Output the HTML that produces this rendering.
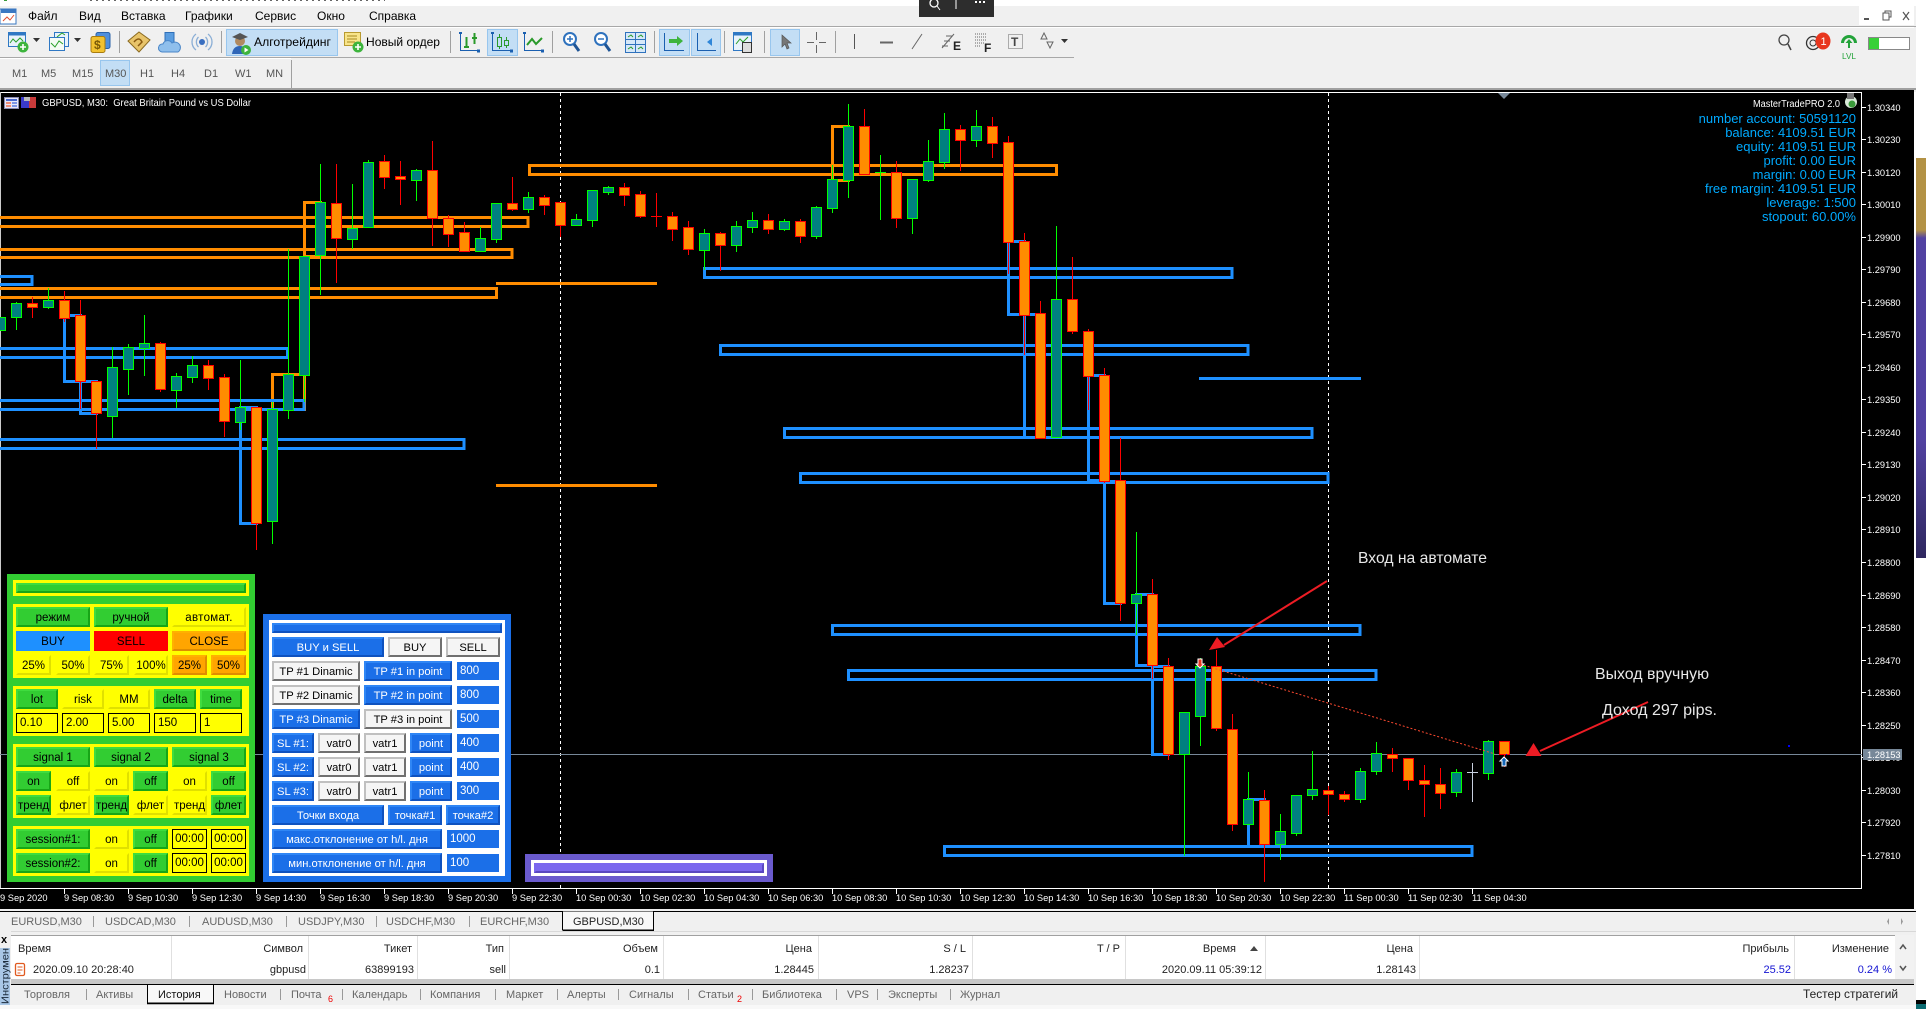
<!DOCTYPE html>
<html lang="ru"><head><meta charset="utf-8"><title>MetaTrader</title>
<style>
html,body{margin:0;padding:0;background:#fff;width:1926px;height:1009px;overflow:hidden}
svg{position:absolute;left:0;top:0;font-family:"Liberation Sans","Noto Sans CJK SC",sans-serif}
.p{position:absolute}
.b{position:absolute;box-sizing:border-box;border:2px solid;text-align:center;font:11.5px/18px "Liberation Sans",sans-serif;color:#000;white-space:nowrap;overflow:hidden}
.g{background:#32cd32;border-color:#3fdc3f #17a617 #17a617 #3fdc3f}
.y{background:#ff0;border-color:#ff0 #e0e000 #e0e000 #ff0}
.bl{background:#1e90ff;border-color:#1e90ff}
.r{background:#f00;border-color:#f00}
.o{background:#ffa500;border-color:#ffb000 #e08c00 #e08c00 #ffb000}
.u{background:#1b6fe8;border-color:#2f86f5 #0f52bf #0f52bf #2f86f5;color:#fff;font-size:11.2px}
.w{background:#f5f5f5;border-color:#c0c0c0 #707070 #707070 #c0c0c0;font-size:11.2px}
.ib{border:1px solid #000;background:#ff0;text-align:left;padding-left:3px;line-height:19px}
.iu{border:0;background:#1b6fe8;color:#fff;text-align:left;padding-left:3px;line-height:19px}
.m{font-size:12px;fill:#000}
.tf{font-size:11px;fill:#555}
.tb{font-size:11px;fill:#666}
.h{font-size:11px;fill:#222;text-anchor:end}
.t{font-size:9.3px;fill:#fff}
.i{font-size:13px;fill:#00aaff;text-anchor:end}
</style></head><body>
<svg width="1926" height="1009" viewBox="0 0 1926 1009">
<defs><linearGradient id="wp" x1="0" y1="0" x2="0" y2="1"><stop offset="0" stop-color="#b39245"/><stop offset=".18" stop-color="#b39245"/><stop offset=".2" stop-color="#5242a2"/><stop offset=".7" stop-color="#5242a2"/><stop offset="1" stop-color="#2f2860"/></linearGradient></defs>
<rect x="1916" y="158" width="10" height="400" fill="url(#wp)"/>
<rect x="1916" y="1000" width="10" height="4" fill="#000"/><rect x="1916" y="1004" width="10" height="5" fill="#0a6a70"/>
<rect x="0" y="6" width="1916" height="86" fill="#f0f0f0"/>
<rect x="0" y="0" width="1926" height="6" fill="#fff"/>
<path d="M90 .5H385" stroke="#666" stroke-dasharray="2 4" fill="none"/><path d="M4 .5h3" stroke="#3a9a3a"/>
<!-- top popup -->
<rect x="919" y="0" width="75" height="17" fill="#2d2d2d"/>
<circle cx="934" cy="3" r="4" fill="none" stroke="#fff" stroke-width="1.3"/><path d="M937 6l3 4M956 0v9" stroke="#fff" fill="none"/><path d="M975 2h2M979 2h2M983 2h2" stroke="#fff" stroke-width="2"/>
<!-- menu -->
<rect x="0" y="9" width="16" height="15" fill="#fff" stroke="#3a78c2"/><rect x="1" y="9" width="15" height="4" fill="#3a78c2"/><path d="M3 21l4-4 3 3 4-5" stroke="#e05030" fill="none"/>
<g class="m"><text class="m" x="28" y="20">Файл</text><text class="m" x="79" y="20">Вид</text><text class="m" x="121" y="20">Вставка</text><text class="m" x="185" y="20">Графики</text><text class="m" x="255" y="20">Сервис</text><text class="m" x="317" y="20">Окно</text><text class="m" x="369" y="20">Справка</text></g>
<rect x="1859" y="6" width="55" height="19" fill="#fff"/>
<path d="M1864 19h5" stroke="#555" stroke-width="2"/><path d="M1883 13h6v7h-6zM1885 13v-2h6v6h-2" fill="none" stroke="#555"/><path d="M1903 12l6 8M1909 12l-6 8" stroke="#555" stroke-width="1.2"/>
<!-- toolbar lines -->
<rect x="0" y="26" width="1916" height="1" fill="#a8a8a8"/><rect x="0" y="27" width="1914" height="1" fill="#fff"/>
<rect x="0" y="57" width="1074" height="1" fill="#a8a8a8"/><rect x="0" y="58" width="291" height="1" fill="#fff"/>
<path d="M119.5 31v22M221.5 31v22M450.5 31v22M552.5 31v22M654.5 31v22M724.5 31v22M764.5 31v22M835.5 31v22M291.5 60v28" stroke="#a0a0a0"/>
<!-- highlights -->
<g fill="#c3def5" stroke="#98c6ee"><rect x="226.5" y="29.5" width="111" height="26"/><rect x="487.5" y="29.5" width="30" height="26"/><rect x="659.5" y="29.5" width="30" height="26"/><rect x="691.5" y="29.5" width="29" height="26"/><rect x="770.5" y="29.5" width="29" height="26"/><rect x="100.5" y="60.5" width="29" height="25"/></g>
<!-- new chart icon -->
<rect x="8.5" y="32.5" width="17" height="14" fill="#e8f2fb" stroke="#2f78c4"/><rect x="8.5" y="32.5" width="17" height="3" fill="#2f78c4"/><path d="M10 43l3-4 3 3 4-4 3 3" stroke="#2aa02a" fill="none"/><circle cx="23" cy="47" r="5.5" fill="#3db43d"/><path d="M23 44v6M20 47h6" stroke="#fff" stroke-width="1.6"/><path d="M33 38h7l-3.5 4z" fill="#333"/>
<rect x="54.5" y="32.5" width="14" height="14" fill="#e8f2fb" stroke="#2f78c4"/><rect x="49.5" y="37.5" width="15" height="13" fill="#f5fbf5" stroke="#2f78c4"/><path d="M51 43l4 4 4-6 4 3M57 37l5-4 3 2" stroke="#2aa02a" fill="none"/><path d="M74 38h7l-3.5 4z" fill="#333"/>
<!-- money -->
<rect x="96" y="32.5" width="14" height="16" rx="2" fill="#4f8fdc" stroke="#2a62a8"/><rect x="91" y="36.5" width="14" height="16" rx="2" fill="#f2c230" stroke="#a87c10"/><text x="94" y="49" font-size="12" font-weight="bold" fill="#7a5a08">$</text>
<!-- book -->
<path d="M128 41l11-9 11 8-11 12z" fill="#e8c46a" stroke="#8a6a20"/><path d="M134 42q5-6 8 0l-4 4" fill="none" stroke="#8a5a10" stroke-width="1.5"/>
<!-- cloud -->
<rect x="165" y="32.5" width="9" height="13" fill="#5a9de0" stroke="#2f6fb8"/><path d="M162 52a4 4 0 0 1 1-8 5 5 0 0 1 9-1 4.5 4.5 0 0 1 6 9z" fill="#8fbfec" stroke="#4a86c8"/>
<!-- radio -->
<g fill="none" stroke="#8aaed6" stroke-width="1.3"><path d="M196 34a10 10 0 0 0 0 16M208 34a10 10 0 0 1 0 16M198.5 37a7 7 0 0 0 0 10M205.5 37a7 7 0 0 1 0 10"/></g><circle cx="202" cy="42" r="3" fill="#3a6fc0"/>
<!-- algo -->
<circle cx="240" cy="41" r="5" fill="#b08a60"/><path d="M232 37l8-4 8 4-8 3z" fill="#555"/><path d="M232 54q1-8 8-8t7 8z" fill="#2f66b8"/><circle cx="246" cy="50" r="5" fill="#3db43d"/><path d="M244.5 47.5v5l4-2.5z" fill="#fff"/>
<text x="254" y="46" font-size="12" fill="#000" textLength="77" lengthAdjust="spacingAndGlyphs">Алготрейдинг</text>
<!-- new order -->
<rect x="344.5" y="32.5" width="16" height="13" fill="#f8e48a" stroke="#b89a30"/><path d="M347 36h10M347 39h10M347 42h8" stroke="#a88a20"/><circle cx="358" cy="47" r="5.5" fill="#3db43d"/><path d="M358 44v6M355 47h6" stroke="#fff" stroke-width="1.6"/>
<text x="366" y="46" font-size="12" fill="#000" textLength="74" lengthAdjust="spacingAndGlyphs">Новый ордер</text>
<!-- chart type icons -->
<g fill="none" stroke="#1a5fb0"><path d="M460.5 33v17.5H479M492.5 33v17.5H512M524.5 33v17.5H543"/></g>
<g fill="#1a5fb0"><rect x="459" y="32" width="3" height="2"/><rect x="477" y="49.5" width="3" height="3"/><rect x="491" y="32" width="3" height="2"/><rect x="510" y="49.5" width="3" height="3"/><rect x="523" y="32" width="3" height="2"/><rect x="541" y="49.5" width="3" height="3"/></g>
<path d="M466.5 37v11M464 47h5M474.5 33v11M472 38h5" stroke="#2a9a2a" stroke-width="2" fill="none"/>
<path d="M499.5 34v15M506.5 37v11" stroke="#2a9a2a"/><rect x="497.5" y="37.5" width="4" height="9" fill="#c3def5" stroke="#2a9a2a"/><rect x="504.5" y="40.5" width="4" height="5" fill="#c3def5" stroke="#2a9a2a"/>
<path d="M527 45l5-6 4 5 6-6" stroke="#2a9a2a" stroke-width="2" fill="none"/>
<!-- zoom -->
<g fill="#fff" stroke="#2f72bd" stroke-width="2"><circle cx="570" cy="39" r="6"/><circle cx="601" cy="39" r="6"/></g><path d="M574 44l5 7M605 44l5 7" stroke="#1f5596" stroke-width="3"/><path d="M567 39h6M570 36v6M598 39h6" stroke="#2f72bd" stroke-width="1.5"/>
<!-- tile -->
<rect x="625.5" y="32.5" width="20" height="20" fill="#d6e8f8" stroke="#2f72bd"/><path d="M635.5 32v20M625 39.5h20M625 44.5h20" stroke="#2f72bd"/><path d="M628 37l3-2 2 2M638 37l3-2 2 2M628 49l3-2 2 2M638 49l3-2 2 2" stroke="#2a9a2a" fill="none"/>
<!-- autoscroll -->
<path d="M664.5 33v17.5H684M697.5 33v17.5H716" stroke="#1a5fb0" fill="none"/><path d="M669 39h8v-3l6 5-6 5v-3h-8z" fill="#3db43d"/><path d="M712 38v8l-5-4z" fill="#2f86d8"/>
<!-- template -->
<rect x="733.5" y="32.5" width="18" height="18" fill="#e8f2fb" stroke="#2f78c4"/><rect x="733.5" y="32.5" width="18" height="3" fill="#2f78c4"/><path d="M736 44l4-5 3 3 5-5" stroke="#2aa02a" fill="none"/><rect x="742.5" y="42.5" width="9" height="10" fill="#ddd" stroke="#333"/>
<!-- cursor -->
<path d="M782 35v12l3-3 2 5 2-1-2-5h4z" fill="#777" stroke="#555" stroke-width=".7"/>
<path d="M816.5 32v8M816.5 45v8M807 42.5h7M819 42.5h7" stroke="#666"/><path d="M854.5 34v15" stroke="#555"/><path d="M880 42.5h13" stroke="#666" stroke-width="2"/><path d="M912 49l10-15" stroke="#666"/>
<path d="M942 48l12-14M946 36h6M944 41h6M942 46h6" stroke="#666" fill="none"/><text x="953" y="50" font-size="12" font-weight="bold" fill="#222">E</text>
<path d="M975 34h12M975 37h12M975 40h12M975 43h9M975 46h6" stroke="#666" stroke-dasharray="1 1"/><text x="984" y="52" font-size="12" font-weight="bold" fill="#222">F</text>
<rect x="1008.5" y="34.5" width="14" height="14" fill="none" stroke="#666" stroke-dasharray="1 1"/><text x="1011" y="46" font-size="12" font-weight="bold" fill="#444">T</text>
<path d="M1044 33l3 6h-6zM1050 48l-3-6h6z" fill="none" stroke="#666"/><path d="M1061 39h7l-3.5 4z" fill="#333"/>
<!-- right status -->
<circle cx="1784" cy="40" r="5" fill="none" stroke="#444" stroke-width="1.3"/><path d="M1788 44l3 6" stroke="#444" stroke-width="1.5"/>
<circle cx="1813" cy="43" r="6.5" fill="none" stroke="#333" stroke-width="1.3"/><circle cx="1813" cy="43" r="3" fill="none" stroke="#333"/><ellipse cx="1823" cy="41" rx="7.5" ry="8.5" fill="#e8361e"/><text x="1820.5" y="45" font-size="11" fill="#fff">1</text>
<path d="M1849 35a8 8 0 0 0-8 8h3a5 5 0 0 1 10 0h3a8 8 0 0 0-8-8z" fill="#23a33a"/><path d="M1849 39l-3.5 4h2.5v5h2v-5h2.5z" fill="#23a33a"/><text x="1842" y="59" font-size="8" fill="#23a33a" textLength="14" lengthAdjust="spacingAndGlyphs">LVL</text>
<rect x="1868.5" y="37.5" width="41" height="12" fill="#fff" stroke="#888"/><rect x="1869" y="38" width="10" height="11" fill="#38d038"/>
<!-- timeframes -->
<g><text class="tf" x="12" y="77">M1</text><text class="tf" x="41" y="77">M5</text><text class="tf" x="72" y="77">M15</text><text class="tf" x="105" y="77">M30</text><text class="tf" x="140" y="77">H1</text><text class="tf" x="171" y="77">H4</text><text class="tf" x="204" y="77">D1</text><text class="tf" x="235" y="77">W1</text><text class="tf" x="266" y="77">MN</text></g>
<rect x="0" y="88" width="1916" height="2" fill="#a0a0a0"/>
<!-- chart -->
<rect x="0" y="90" width="1914" height="821" fill="#000"/>
<rect x="0" y="92" width="1862" height="1" fill="#fff"/><rect x="0" y="92" width="1" height="797" fill="#ccc"/>
<rect x="1861" y="92" width="1" height="797" fill="#fff"/><rect x="0" y="888" width="1862" height="1" fill="#fff"/>
<path d="M560.5 93V888M1328.5 93V888" stroke="#fff" stroke-dasharray="3 3"/>
<path d="M0 754.5H1862" stroke="#778899"/>
<path d="M1498 93h12l-6 6z" fill="#778899"/>
<!-- orange boxes -->
<g fill="none" stroke="#ff8c00" stroke-width="3">
<path d="M-5 217.5H528V226.5H-5M-5 249.5H512V257.5H-5M-5 288.5H496.5V297.5H-5M529.5 165.5H1056.5V174.5H529.5z"/>
<path d="M304.5 202.5H320.5V256.5H304.5zM272.5 374.5H304.5V409.5H272.5zM832.5 126.5H848.5V180.5H832.5z"/>
<path d="M496 283.5H657M496 485.5H657"/>
</g>
<!-- blue boxes -->
<g fill="none" stroke="#1e90ff" stroke-width="3">
<path d="M-5 276.5H32V284.5H-5M-5 348.5H287.5V357.5H-5M-5 400.5H304V409.5H-5M-5 439.5H464V448.5H-5"/>
<path d="M704.5 268.5H1232V277.5H704.5zM720.5 345.5H1248V354.5H720.5zM784.5 428.5H1312V437.5H784.5zM800.5 473.5H1328V482.5H800.5zM832.5 625.5H1360V634.5H832.5zM848.5 670.5H1376V679.5H848.5zM944.5 846.5H1472V855.5H944.5z"/>
<path d="M64.5 315.5H80.5V381.5H64.5zM80.5 381.5H96.5V413.5H80.5zM240.5 407.5H256.5V523.5H240.5zM1008.5 241.5H1024.5V314.5H1008.5zM1024.5 314.5H1040.5V437.5H1024.5zM1088.5 375.5H1104.5V480.5H1088.5zM1104.5 481.5H1120.5V603.5H1104.5zM1136.5 594.5H1152.5V665.5H1136.5zM1152.5 666.5H1168.5V754.5H1152.5zM1248.5 799.5H1264.5V846.5H1248.5z"/>
<path d="M1199 378.5H1361"/>
</g>
<!-- wicks -->
<path fill="none" stroke="#0f0" d="M16.5 302V330M48.5 288V309M112.5 347V438M128.5 344V395M144.5 315V376M176.5 373V408M192.5 356V383M240.5 360V430M272.5 402V544M288.5 249V419M304.5 256V402M320.5 164V295M352.5 184V249M368.5 160V227M416.5 169V201M480.5 227V251M496.5 203V243M528.5 192V213M576.5 214V226M592.5 190V227M608.5 186V195M704.5 229V270M736.5 221V252M752.5 212V233M784.5 219V231M816.5 206V239M832.5 165V213M848.5 104V198M880.5 155V220M875 172.5H886M912.5 179V234M928.5 140V182M944.5 113V169M976.5 110V147M1056.5 226V437M1136.5 532V635M1184.5 712V856M1200.5 658V746M1248.5 772V824M1280.5 814V860M1296.5 795V836M1312.5 751V800M1360.5 768V803M1376.5 742V775M1456.5 769V797M1488.5 740V780"/>
<path fill="none" stroke="#f00" d="M32.5 297V318M64.5 291V322M80.5 300V409M96.5 381V449M160.5 342V392M208.5 360V390M224.5 374V437M256.5 407V550M336.5 164V283M384.5 155V189M400.5 161V205M432.5 141V246M448.5 215V247M464.5 222V252M512.5 177V211M544.5 195V215M560.5 202V237M624.5 183V206M640.5 191V218M656.5 193V227M651 216.5H662M672.5 212V241M688.5 221V255M720.5 232V271M768.5 214V234M800.5 219V243M864.5 109V174M896.5 161V228M960.5 125V171M992.5 117V158M1008.5 136V274M1024.5 233V355M1040.5 301V438M1072.5 257V334M1088.5 329V410M1104.5 368V483M1120.5 438V621M1152.5 579V679M1168.5 658V760M1216.5 650V731M1232.5 714V831M1264.5 790V882M1328.5 786V815M1344.5 791V802M1392.5 748V772M1408.5 758V790M1424.5 765V817M1440.5 768V809M1504.5 741V767"/>
<path fill="none" stroke="#c8d0e0" d="M1472.5 763V802M1467 772.5H1478"/>
<!-- bodies up -->
<path fill="#008080" stroke="#0f0" d="M-4.5 317.5h10v13h-10zM11.5 303.5h10v14h-10zM43.5 300.5h10v7h-10zM107.5 367.5h10v49h-10zM123.5 347.5h10v22h-10zM139.5 343.5h10v5h-10zM171.5 376.5h10v14h-10zM187.5 365.5h10v12h-10zM235.5 407.5h10v15h-10zM267.5 409.5h10v112h-10zM283.5 374.5h10v36h-10zM299.5 256.5h10v119h-10zM315.5 202.5h10v53h-10zM347.5 228.5h10v11h-10zM363.5 162.5h10v65h-10zM411.5 170.5h10v10h-10zM475.5 238.5h10v13h-10zM491.5 203.5h10v36h-10zM523.5 197.5h10v12h-10zM571.5 219.5h10v6h-10zM587.5 190.5h10v30h-10zM603.5 187.5h10v5h-10zM699.5 233.5h10v17h-10zM731.5 226.5h10v19h-10zM747.5 220.5h10v7h-10zM779.5 221.5h10v8h-10zM811.5 207.5h10v29h-10zM827.5 179.5h10v29h-10zM843.5 126.5h10v54h-10zM907.5 179.5h10v39h-10zM923.5 161.5h10v19h-10zM939.5 129.5h10v33h-10zM971.5 126.5h10v14h-10zM1051.5 299.5h10v138h-10zM1131.5 594.5h10v9h-10zM1179.5 712.5h10v42h-10zM1195.5 666.5h10v50h-10zM1243.5 799.5h10v25h-10zM1275.5 831.5h10v13h-10zM1291.5 795.5h10v38h-10zM1307.5 789.5h10v6h-10zM1355.5 771.5h10v28h-10zM1371.5 753.5h10v18h-10zM1451.5 772.5h10v20h-10zM1483.5 741.5h10v32h-10z"/>
<!-- bodies down -->
<path fill="#ff8c00" stroke="#f00" d="M27.5 303.5h10v4h-10zM59.5 300.5h10v18h-10zM75.5 315.5h10v66h-10zM91.5 381.5h10v32h-10zM155.5 343.5h10v46h-10zM203.5 365.5h10v13h-10zM219.5 377.5h10v44h-10zM251.5 407.5h10v116h-10zM331.5 203.5h10v35h-10zM379.5 161.5h10v16h-10zM395.5 176.5h10v3h-10zM427.5 170.5h10v48h-10zM443.5 218.5h10v16h-10zM459.5 232.5h10v19h-10zM507.5 203.5h10v6h-10zM539.5 197.5h10v8h-10zM555.5 202.5h10v23h-10zM619.5 187.5h10v8h-10zM635.5 194.5h10v22h-10zM667.5 216.5h10v13h-10zM683.5 227.5h10v22h-10zM715.5 233.5h10v12h-10zM763.5 220.5h10v9h-10zM795.5 221.5h10v15h-10zM859.5 126.5h10v48h-10zM891.5 172.5h10v46h-10zM955.5 129.5h10v11h-10zM987.5 126.5h10v17h-10zM1003.5 142.5h10v100h-10zM1019.5 241.5h10v74h-10zM1035.5 313.5h10v125h-10zM1067.5 299.5h10v32h-10zM1083.5 331.5h10v45h-10zM1099.5 375.5h10v106h-10zM1115.5 480.5h10v123h-10zM1147.5 594.5h10v71h-10zM1163.5 666.5h10v88h-10zM1211.5 666.5h10v62h-10zM1227.5 729.5h10v95h-10zM1259.5 800.5h10v44h-10zM1323.5 790.5h10v4h-10zM1339.5 794.5h10v5h-10zM1387.5 754.5h10v4h-10zM1403.5 758.5h10v22h-10zM1419.5 780.5h10v4h-10zM1435.5 784.5h10v9h-10zM1499.5 741.5h10v13h-10z"/>
<!-- trade line & arrows -->
<path d="M1200 664L1495 754" stroke="#ff4a30" stroke-dasharray="2 2" fill="none"/>
<path d="M1200 668l4-4h-2v-5h-4v5h-2z" fill="#e8361e" stroke="#fff"/>
<path d="M1504 757l4 4h-2v5h-4v-5h-2z" fill="#1467b8" stroke="#fff"/>
<path d="M1327 581L1224 645M1648 702L1540 751" stroke="#ed1c24" stroke-width="2" fill="none"/>
<path d="M1217 637L1209 650 1225 647zM1533.5 743L1525.5 756 1541.5 756z" fill="#ed1c24"/>
<!-- chart annotations -->
<text x="1358" y="563" font-size="16" fill="#e8e8e8" textLength="129" lengthAdjust="spacingAndGlyphs">Вход на автомате</text>
<text x="1595" y="679" font-size="16" fill="#e8e8e8" textLength="114" lengthAdjust="spacingAndGlyphs">Выход вручную</text>
<text x="1602" y="715" font-size="16" fill="#e8e8e8" textLength="115" lengthAdjust="spacingAndGlyphs">Доход 297 pips.</text>
<!-- chart header -->
<rect x="4.5" y="97.5" width="14" height="11" fill="#e8e8f8" stroke="#8a8ab0"/><path d="M6 100h11" stroke="#4a6ad0" stroke-width="2"/><path d="M6 103h5M6 106h5" stroke="#f07050" stroke-width="1.5"/><path d="M12 103h5M12 106h5" stroke="#5a7ae0" stroke-width="1.5"/>
<rect x="21" y="97" width="8" height="11" fill="#3a3ac8"/><rect x="29" y="97" width="7" height="11" fill="#c83a3a"/><rect x="24" y="97" width="6" height="4" fill="#bbb"/>
<text x="42" y="106" font-size="10.5" fill="#fff" textLength="209" lengthAdjust="spacingAndGlyphs">GBPUSD, M30:&#160;&#160;Great Britain Pound vs US Dollar</text>
<!-- info -->
<text x="1840" y="107" font-size="10" fill="#fff" text-anchor="end" textLength="87" lengthAdjust="spacingAndGlyphs">MasterTradePRO 2.0</text>
<circle cx="1851" cy="102" r="6" fill="#d8e8d8"/><rect x="1847" y="93" width="7" height="6" fill="#777"/><circle cx="1852" cy="104" r="3.5" fill="#3a9a3a"/>
<g><text class="i" x="1856" y="123">number account: 50591120</text><text class="i" x="1856" y="137">balance: 4109.51 EUR</text><text class="i" x="1856" y="151">equity: 4109.51 EUR</text><text class="i" x="1856" y="165">profit: 0.00 EUR</text><text class="i" x="1856" y="179">margin: 0.00 EUR</text><text class="i" x="1856" y="193">free margin: 4109.51 EUR</text><text class="i" x="1856" y="207">leverage: 1:500</text><text class="i" x="1856" y="221">stopout: 60.00%</text></g>
<!-- price axis -->
<path stroke="#fff" d="M1862 107.5h4M1862 139.5h4M1862 172.5h4M1862 204.5h4M1862 237.5h4M1862 269.5h4M1862 302.5h4M1862 334.5h4M1862 367.5h4M1862 399.5h4M1862 432.5h4M1862 464.5h4M1862 497.5h4M1862 529.5h4M1862 562.5h4M1862 595.5h4M1862 627.5h4M1862 660.5h4M1862 692.5h4M1862 725.5h4M1862 757.5h4M1862 790.5h4M1862 822.5h4M1862 855.5h4"/>
<g><text class="t" x="1867" y="111">1.30340</text><text class="t" x="1867" y="143">1.30230</text><text class="t" x="1867" y="176">1.30120</text><text class="t" x="1867" y="208">1.30010</text><text class="t" x="1867" y="241">1.29900</text><text class="t" x="1867" y="273">1.29790</text><text class="t" x="1867" y="306">1.29680</text><text class="t" x="1867" y="338">1.29570</text><text class="t" x="1867" y="371">1.29460</text><text class="t" x="1867" y="403">1.29350</text><text class="t" x="1867" y="436">1.29240</text><text class="t" x="1867" y="468">1.29130</text><text class="t" x="1867" y="501">1.29020</text><text class="t" x="1867" y="533">1.28910</text><text class="t" x="1867" y="566">1.28800</text><text class="t" x="1867" y="599">1.28690</text><text class="t" x="1867" y="631">1.28580</text><text class="t" x="1867" y="664">1.28470</text><text class="t" x="1867" y="696">1.28360</text><text class="t" x="1867" y="729">1.28250</text><text class="t" x="1867" y="761">1.28140</text><text class="t" x="1867" y="794">1.28030</text><text class="t" x="1867" y="826">1.27920</text><text class="t" x="1867" y="859">1.27810</text></g>
<rect x="1863" y="749" width="39" height="11" fill="#778899"/><text x="1867" y="758" font-size="9.3" fill="#fff">1.28153</text>
<path d="M1506 754.5h1" stroke="#00f"/><rect x="1788" y="745" width="2" height="2" fill="#00f"/>
<!-- time axis -->
<path stroke="#fff" d="M64.5 889v5M128.5 889v5M192.5 889v5M256.5 889v5M320.5 889v5M384.5 889v5M448.5 889v5M512.5 889v5M576.5 889v5M640.5 889v5M704.5 889v5M768.5 889v5M832.5 889v5M896.5 889v5M960.5 889v5M1024.5 889v5M1088.5 889v5M1152.5 889v5M1216.5 889v5M1280.5 889v5M1344.5 889v5M1408.5 889v5M1472.5 889v5"/>
<g><text class="t" x="0" y="901">9 Sep 2020</text><text class="t" x="64" y="901">9 Sep 08:30</text><text class="t" x="128" y="901">9 Sep 10:30</text><text class="t" x="192" y="901">9 Sep 12:30</text><text class="t" x="256" y="901">9 Sep 14:30</text><text class="t" x="320" y="901">9 Sep 16:30</text><text class="t" x="384" y="901">9 Sep 18:30</text><text class="t" x="448" y="901">9 Sep 20:30</text><text class="t" x="512" y="901">9 Sep 22:30</text><text class="t" x="576" y="901">10 Sep 00:30</text><text class="t" x="640" y="901">10 Sep 02:30</text><text class="t" x="704" y="901">10 Sep 04:30</text><text class="t" x="768" y="901">10 Sep 06:30</text><text class="t" x="832" y="901">10 Sep 08:30</text><text class="t" x="896" y="901">10 Sep 10:30</text><text class="t" x="960" y="901">10 Sep 12:30</text><text class="t" x="1024" y="901">10 Sep 14:30</text><text class="t" x="1088" y="901">10 Sep 16:30</text><text class="t" x="1152" y="901">10 Sep 18:30</text><text class="t" x="1216" y="901">10 Sep 20:30</text><text class="t" x="1280" y="901">10 Sep 22:30</text><text class="t" x="1344" y="901">11 Sep 00:30</text><text class="t" x="1408" y="901">11 Sep 02:30</text><text class="t" x="1472" y="901">11 Sep 04:30</text></g>
<!-- bottom -->
<rect x="0" y="909" width="1916" height="100" fill="#f0f0f0"/>
<rect x="0" y="911" width="1916" height="1" fill="#000"/>
<g><text class="tb" x="11" y="925">EURUSD,M30</text><text class="tb" x="105" y="925">USDCAD,M30</text><text class="tb" x="202" y="925">AUDUSD,M30</text><text class="tb" x="298" y="925">USDJPY,M30</text><text class="tb" x="386" y="925">USDCHF,M30</text><text class="tb" x="480" y="925">EURCHF,M30</text></g>
<path d="M93.5 916v11M189.5 916v11M286.5 916v11M376.5 916v11M469.5 916v11" stroke="#999"/>
<path d="M562.5 911.5V930H653.5V911.5" fill="#f8f8f8" stroke="#000"/><path d="M563 930.5H654" stroke="#000" stroke-width="1.5"/>
<text x="573" y="925" font-size="11" fill="#222">GBPUSD,M30</text>
<path d="M1889 918v7l-2-3.5zM1901 918v7l2-3.5z" fill="#999"/>
<rect x="0" y="931" width="1916" height="1" fill="#d8d8d8"/>
<rect x="11" y="935" width="1884" height="44" fill="#fff"/>
<rect x="11" y="935" width="1884" height="1" fill="#a0a0a0"/>
<path d="M171.5 936V979M308.5 936V979M417.5 936V979M509.5 936V979M663.5 936V979M818.5 936V979M972.5 936V979M1125.5 936V979M1265.5 936V979M1419.5 936V979M1794.5 936V979M1895.5 936V979" stroke="#e0e0e0"/>
<rect x="1895" y="935" width="19" height="44" fill="#f2f2f2"/>
<path d="M1900 949l3-4 3 4M1900 966l3 4 3-4" fill="none" stroke="#555" stroke-width="1.5"/>
<rect x="0" y="979" width="1914" height="5" fill="#c8c8c8"/>
<rect x="0" y="984" width="1914" height="1" fill="#000"/>
<g><text x="18" y="952" font-size="11" fill="#222">Время</text><text class="h" x="303" y="952">Символ</text><text class="h" x="412" y="952">Тикет</text><text class="h" x="504" y="952">Тип</text><text class="h" x="658" y="952">Объем</text><text class="h" x="812" y="952">Цена</text><text class="h" x="966" y="952">S / L</text><text class="h" x="1120" y="952">T / P</text><text class="h" x="1236" y="952">Время</text><text class="h" x="1413" y="952">Цена</text><text class="h" x="1789" y="952">Прибыль</text><text class="h" x="1889" y="952">Изменение</text></g>
<path d="M1250 951l4-5 4 5z" fill="#444"/>
<rect x="15.5" y="963.5" width="9" height="12" rx="1.5" fill="#fff" stroke="#e05a20" stroke-width="1.3"/><path d="M17.5 967h5M17.5 970h5M17.5 973h3" stroke="#e05a20"/>
<g><text x="33" y="973" font-size="11" fill="#222">2020.09.10 20:28:40</text><text class="h" x="306" y="973">gbpusd</text><text class="h" x="414" y="973">63899193</text><text class="h" x="506" y="973">sell</text><text class="h" x="660" y="973">0.1</text><text class="h" x="814" y="973">1.28445</text><text class="h" x="969" y="973">1.28237</text><text class="h" x="1262" y="973">2020.09.11 05:39:12</text><text class="h" x="1416" y="973">1.28143</text><text class="h" x="1791" y="973" style="fill:#1414d2">25.52</text><text class="h" x="1892" y="973" style="fill:#1414d2">0.24 %</text></g>
<!-- left tab -->
<rect x="0" y="931" width="11" height="78" fill="#f0f0f0"/>
<text x="1" y="943" font-size="11" font-weight="bold" fill="#000">x</text>
<rect x="0" y="948" width="10" height="57" fill="#a9c7e6"/>
<text transform="translate(8.5 1004) rotate(-90)" font-size="10.5" fill="#1a2a3a" textLength="56" lengthAdjust="spacingAndGlyphs">Инструмен</text>
<!-- bottom tabs -->
<g><text class="tb" x="24" y="998">Торговля</text><text class="tb" x="96" y="998">Активы</text><text class="tb" x="224" y="998">Новости</text><text class="tb" x="291" y="998">Почта</text><text x="328" y="1002" font-size="9" fill="#e00">6</text><text class="tb" x="352" y="998">Календарь</text><text class="tb" x="430" y="998">Компания</text><text class="tb" x="506" y="998">Маркет</text><text class="tb" x="567" y="998">Алерты</text><text class="tb" x="629" y="998">Сигналы</text><text class="tb" x="698" y="998">Статьи</text><text x="737" y="1002" font-size="9" fill="#e00">2</text><text class="tb" x="762" y="998">Библиотека</text><text class="tb" x="847" y="998">VPS</text><text class="tb" x="888" y="998">Эксперты</text><text class="tb" x="960" y="998">Журнал</text></g>
<path d="M86.5 989v11M280.5 989v11M342.5 989v11M420.5 989v11M495.5 989v11M557.5 989v11M618.5 989v11M688.5 989v11M752.5 989v11M836.5 989v11M877.5 989v11M950.5 989v11" stroke="#999"/>
<path d="M147.5 985V1003H213.5V985" fill="#f8f8f8" stroke="#000"/><path d="M147 1003.5H214" stroke="#000" stroke-width="1.5"/>
<text x="158" y="998" font-size="11" fill="#111">История</text>
<text x="1803" y="998" font-size="11.5" fill="#222" textLength="95" lengthAdjust="spacingAndGlyphs">Тестер стратегий</text>
<rect x="0" y="1005" width="1916" height="4" fill="#f8f8f8"/>
</svg>

<!-- GREEN PANEL -->
<div class="p" style="left:7px;top:574px;width:248px;height:308px;background:#32cd32"></div>
<div class="p" style="left:13px;top:580px;width:236px;height:16px;background:#ff0"></div>
<div class="b g" style="left:16px;top:583px;width:230px;height:10px"></div>
<div class="p" style="left:13px;top:604px;width:236px;height:74px;background:#ff0"></div>
<div class="p" style="left:13px;top:686px;width:236px;height:50px;background:#ff0"></div>
<div class="p" style="left:13px;top:744px;width:236px;height:74px;background:#ff0"></div>
<div class="p" style="left:13px;top:826px;width:236px;height:50px;background:#ff0"></div>
<div class="b g" style="left:16px;top:607px;width:74px;height:20px">режим</div>
<div class="b g" style="left:94px;top:607px;width:74px;height:20px">ручной</div>
<div class="b y" style="left:172px;top:607px;width:74px;height:20px;letter-spacing:.3px">автомат.</div>
<div class="b bl" style="left:16px;top:631px;width:74px;height:20px">BUY</div>
<div class="b r" style="left:94px;top:631px;width:74px;height:20px">SELL</div>
<div class="b o" style="left:172px;top:631px;width:74px;height:20px">CLOSE</div>
<div class="b y" style="left:16px;top:655px;width:35px;height:20px">25%</div>
<div class="b y" style="left:56px;top:655px;width:34px;height:20px">50%</div>
<div class="b y" style="left:94px;top:655px;width:35px;height:20px">75%</div>
<div class="b y" style="left:134px;top:655px;width:34px;height:20px">100%</div>
<div class="b o" style="left:172px;top:655px;width:35px;height:20px">25%</div>
<div class="b o" style="left:211px;top:655px;width:35px;height:20px">50%</div>
<div class="b g" style="left:16px;top:689px;width:42px;height:20px">lot</div>
<div class="b y" style="left:62px;top:689px;width:42px;height:20px">risk</div>
<div class="b y" style="left:108px;top:689px;width:42px;height:20px">MM</div>
<div class="b g" style="left:154px;top:689px;width:42px;height:20px">delta</div>
<div class="b g" style="left:200px;top:689px;width:42px;height:20px">time</div>
<div class="b ib" style="left:16px;top:713px;width:42px;height:20px">0.10</div>
<div class="b ib" style="left:62px;top:713px;width:42px;height:20px">2.00</div>
<div class="b ib" style="left:108px;top:713px;width:42px;height:20px">5.00</div>
<div class="b ib" style="left:154px;top:713px;width:42px;height:20px">150</div>
<div class="b ib" style="left:200px;top:713px;width:42px;height:20px">1</div>
<div class="b g" style="left:16px;top:747px;width:74px;height:20px">signal 1</div>
<div class="b g" style="left:94px;top:747px;width:74px;height:20px">signal 2</div>
<div class="b g" style="left:172px;top:747px;width:74px;height:20px">signal 3</div>
<div class="b g" style="left:16px;top:771px;width:35px;height:20px">on</div>
<div class="b y" style="left:56px;top:771px;width:34px;height:20px">off</div>
<div class="b y" style="left:94px;top:771px;width:35px;height:20px">on</div>
<div class="b g" style="left:133px;top:771px;width:35px;height:20px">off</div>
<div class="b y" style="left:172px;top:771px;width:35px;height:20px">on</div>
<div class="b g" style="left:211px;top:771px;width:35px;height:20px">off</div>
<div class="b g" style="left:16px;top:795px;width:35px;height:20px">тренд</div>
<div class="b y" style="left:56px;top:795px;width:34px;height:20px">флет</div>
<div class="b g" style="left:94px;top:795px;width:35px;height:20px">тренд</div>
<div class="b y" style="left:133px;top:795px;width:35px;height:20px">флет</div>
<div class="b y" style="left:172px;top:795px;width:35px;height:20px">тренд</div>
<div class="b g" style="left:211px;top:795px;width:35px;height:20px">флет</div>
<div class="b g" style="left:16px;top:829px;width:74px;height:20px">session#1:</div>
<div class="b y" style="left:94px;top:829px;width:35px;height:20px">on</div>
<div class="b g" style="left:133px;top:829px;width:35px;height:20px">off</div>
<div class="b ib" style="left:172px;top:829px;width:35px;height:20px;padding:0;text-align:center">00:00</div>
<div class="b ib" style="left:211px;top:829px;width:35px;height:20px;padding:0;text-align:center">00:00</div>
<div class="b g" style="left:16px;top:853px;width:74px;height:20px">session#2:</div>
<div class="b y" style="left:94px;top:853px;width:35px;height:20px">on</div>
<div class="b g" style="left:133px;top:853px;width:35px;height:20px">off</div>
<div class="b ib" style="left:172px;top:853px;width:35px;height:20px;padding:0;text-align:center">00:00</div>
<div class="b ib" style="left:211px;top:853px;width:35px;height:20px;padding:0;text-align:center">00:00</div>

<!-- BLUE PANEL -->
<div class="p" style="left:263px;top:614px;width:248px;height:268px;background:#1b6fe8"></div>
<div class="p" style="left:269px;top:620px;width:236px;height:256px;background:#fff"></div>
<div class="b u" style="left:272px;top:623px;width:230px;height:10px"></div>
<div class="b u" style="left:272px;top:637px;width:112px;height:20px">BUY и SELL</div>
<div class="b w" style="left:388px;top:637px;width:54px;height:20px">BUY</div>
<div class="b w" style="left:446px;top:637px;width:54px;height:20px">SELL</div>
<div class="b w" style="left:272px;top:661px;width:88px;height:20px">TP #1 Dinamic</div>
<div class="b u" style="left:364px;top:661px;width:88px;height:20px">TP #1 in point</div>
<div class="b iu" style="left:457px;top:662px;width:42px;height:18px">800</div>
<div class="b w" style="left:272px;top:685px;width:88px;height:20px">TP #2 Dinamic</div>
<div class="b u" style="left:364px;top:685px;width:88px;height:20px">TP #2 in point</div>
<div class="b iu" style="left:457px;top:686px;width:42px;height:18px">800</div>
<div class="b u" style="left:272px;top:709px;width:88px;height:20px">TP #3 Dinamic</div>
<div class="b w" style="left:364px;top:709px;width:88px;height:20px">TP #3 in point</div>
<div class="b iu" style="left:457px;top:710px;width:42px;height:18px">500</div>
<div class="b u" style="left:272px;top:733px;width:42px;height:20px">SL #1:</div>
<div class="b w" style="left:318px;top:733px;width:42px;height:20px">vatr0</div>
<div class="b w" style="left:364px;top:733px;width:42px;height:20px">vatr1</div>
<div class="b u" style="left:410px;top:733px;width:42px;height:20px">point</div>
<div class="b iu" style="left:457px;top:734px;width:42px;height:18px">400</div>
<div class="b u" style="left:272px;top:757px;width:42px;height:20px">SL #2:</div>
<div class="b w" style="left:318px;top:757px;width:42px;height:20px">vatr0</div>
<div class="b w" style="left:364px;top:757px;width:42px;height:20px">vatr1</div>
<div class="b u" style="left:410px;top:757px;width:42px;height:20px">point</div>
<div class="b iu" style="left:457px;top:758px;width:42px;height:18px">400</div>
<div class="b u" style="left:272px;top:781px;width:42px;height:20px">SL #3:</div>
<div class="b w" style="left:318px;top:781px;width:42px;height:20px">vatr0</div>
<div class="b w" style="left:364px;top:781px;width:42px;height:20px">vatr1</div>
<div class="b u" style="left:410px;top:781px;width:42px;height:20px">point</div>
<div class="b iu" style="left:457px;top:782px;width:42px;height:18px">300</div>
<div class="b u" style="left:272px;top:805px;width:112px;height:20px">Точки входа</div>
<div class="b u" style="left:388px;top:805px;width:54px;height:20px">точка#1</div>
<div class="b u" style="left:446px;top:805px;width:54px;height:20px">точка#2</div>
<div class="b u" style="left:272px;top:829px;width:170px;height:20px">макс.отклонение от h/l. дня</div>
<div class="b iu" style="left:447px;top:830px;width:52px;height:18px">1000</div>
<div class="b u" style="left:272px;top:853px;width:170px;height:20px">мин.отклонение от h/l. дня</div>
<div class="b iu" style="left:447px;top:854px;width:52px;height:18px">100</div>

<!-- PURPLE PANEL -->
<div class="p" style="left:525px;top:854px;width:248px;height:28px;background:#6a5acd"></div>
<div class="p" style="left:531px;top:860px;width:236px;height:16px;background:#fff"></div>
<div class="b" style="left:534px;top:863px;width:230px;height:10px;background:#7b68ee;border-color:#7b68ee #5a48c0 #5a48c0 #7b68ee"></div>
</body></html>
